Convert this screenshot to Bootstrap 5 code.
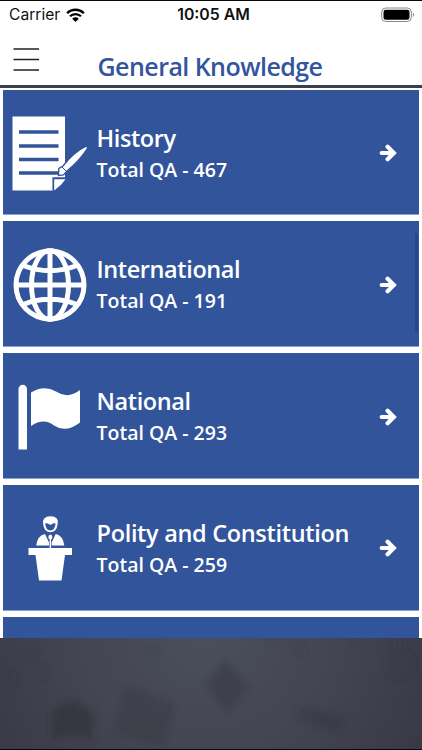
<!DOCTYPE html>
<html lang="en">
<head>
<meta charset="utf-8">
<meta name="viewport" content="width=device-width, initial-scale=1">
<title>General Knowledge</title>
<link rel="stylesheet" href="https://cdn.jsdelivr.net/npm/bootstrap@5.3.0/dist/css/bootstrap.min.css">
<style>
body{font-family:"Open Sans","Noto Sans",sans-serif;background:#fff}
.app{height:750px;border-top:1px solid #0b080c;border-bottom:1px solid #08070b}
.status{height:28px;font-family:Inter,sans-serif;font-size:16px;line-height:28px;color:#111;padding:0 7px 0 9px;flex:none}
.status .side{width:150px}
#carrier{font-size:15.600px}
.wifi{margin-left:6px}
.clock{font-weight:600;font-size:15.800px;padding-left:3px}
.topbar{height:59px;border-bottom:3px solid #38404b;flex:none}
.menu-btn{width:26px;height:24px;left:13px;top:18px}
.topbar h1{font-size:25px;font-weight:600;line-height:32px;letter-spacing:-.55px;color:#33559d;margin:21px 0 0;padding-right:2px}
.topics{height:550px;padding:1.500px 3px 0;gap:6px;flex:none}
.topic{height:125.75px;background:#31549b;color:#fff;padding-top:2.400px;padding-left:9px;padding-right:22px;flex:none;border-bottom:1px solid #8ba2d0}
.pic{width:76px;height:76px;flex:none}
.words{margin-left:8.500px}
.words h2{font-size:23.500px;font-weight:600;line-height:32px;letter-spacing:-.4px;margin:0}
.words h2.wide{letter-spacing:-.32px}
.words p{font-size:19.500px;font-weight:600;line-height:31px;margin:0}
.scrollmark{right:1px;top:12px;width:3px;height:99px;background:#29488a;border-radius:2px}
.ad{min-height:0}
</style>
<script src="https://cdn.jsdelivr.net/npm/bootstrap@5.3.0/dist/js/bootstrap.bundle.min.js"></script>
</head>
<body class="overflow-hidden">
<svg class="d-none"><symbol id="arrow" viewBox="0 0 18 18"><path d="M2.700 9H15M8.600 2.800L14.800 9L8.600 15.200" fill="none" stroke="#fff" stroke-width="4.200" stroke-linecap="round" stroke-linejoin="miter"/></symbol></svg>
<div class="app d-flex flex-column overflow-hidden">
<div class="status d-flex justify-content-between">
<div class="side d-flex align-items-center"><span id="carrier">Carrier</span>
<svg class="wifi" width="19" height="15" viewBox="0 0 19 15"><g fill="none" stroke="#000" stroke-width="2.300"><path d="M1.100 5.200a12 12 0 0 1 16.800 0"/><path d="M4 8.300a7.800 7.800 0 0 1 11 0"/></g><path d="M6.200 10.700a4.700 4.700 0 0 1 6.600 0L9.500 14z"/></svg></div>
<span class="clock">10:05 AM</span>
<div class="side d-flex justify-content-end align-items-center"><svg width="34" height="16" viewBox="0 0 34 16"><rect x=".7" y="1" width="29.600" height="13.500" rx="4" fill="none" stroke="#888"/><rect x="2.500" y="2.800" width="26" height="9.900" rx="2.300"/><path d="M31.800 5.500q2.400 2.200 0 4.600z" fill="#888"/></svg></div>
</div>
<header class="topbar position-relative text-center">
<svg class="menu-btn position-absolute" viewBox="0 0 26 24"><path d="M.5 2H26M.5 12.500H26M.5 23H26" stroke="#222" stroke-width="1.400"/></svg>
<h1><span>General Knowledge</span></h1>
</header>
<main class="topics d-flex flex-column overflow-hidden">
<section class="topic d-flex align-items-center">
<svg class="pic" viewBox="0 0 76 76"><path fill="#fff" d="M.5 1.500H53V63H41V75.500H.5z"/><path d="M7 17H46.500M7 31H46.500M7 44.500H46.500M7 58H47" stroke="#31549b" stroke-width="3.600"/><path d="M42.200 75.500V64.200H53.500Q49 71 42.200 75.500z" fill="#fff"/><path d="M41 75.500V62.800H54" fill="none" stroke="#31549b" stroke-width="1.100"/><path d="M46.500 60.500L46.800 53.500L51 51Q62 37 74 31.200Q76 31 75 34Q68 45 55 56L51.500 60z" fill="#fff" stroke="#31549b" stroke-width="1.300"/><path d="M50 52L55 57" stroke="#31549b"/></svg>
<div class="words"><h2><span>History</span></h2><p><span>Total QA - 467</span></p></div>
<svg class="ms-auto" width="18" height="18"><use href="#arrow"/></svg>
</section>
<section class="topic d-flex align-items-center position-relative">
<svg class="pic" viewBox="0 0 76 76"><g fill="none" stroke="#fff" stroke-width="5"><circle cx="38" cy="38" r="34"/><ellipse cx="38" cy="38" rx="18.500" ry="34.500"/><path d="M38 4V73M3 38H73M11 18.500Q38 29 65 18.500M11 57.500Q38 47 65 57.500"/></g></svg>
<div class="words"><h2><span>International</span></h2><p><span>Total QA - 191</span></p></div>
<svg class="ms-auto" width="18" height="18"><use href="#arrow"/></svg>
<i class="scrollmark position-absolute"></i>
</section>
<section class="topic d-flex align-items-center">
<svg class="pic" viewBox="0 0 76 76"><path fill="#fff" d="M6.500 70.500V10a4.250 4.250 0 0 1 8.500 0V70.500zM19 13.500Q32 5.500 44 12.500Q56 20.500 68 11V43.500Q54 54.500 42 46.500Q32 38.500 19 47z"/></svg>
<div class="words"><h2><span>National</span></h2><p><span>Total QA - 293</span></p></div>
<svg class="ms-auto" width="18" height="18"><use href="#arrow"/></svg>
</section>
<section class="topic d-flex align-items-center">
<svg class="pic" viewBox="0 0 76 76"><g fill="#fff" transform="translate(0 -.5)"><path d="M16.500 38.500H60V45.500H53L49.500 71H27L23.500 45.500H16.500z"/><path d="M24.200 36Q25.500 26 33 24.500L37 33L37 36zM52.300 36Q51 26 43.700 24.500L39.700 33V36z"/><path d="M37.600 28H39.100V38.500H37.600z"/><ellipse cx="38.350" cy="27.500" rx="2" ry="2.600"/><path fill-rule="evenodd" d="M31.200 15Q29.500 7 38.500 6.800Q47.500 7 45.600 15Q44.500 22.800 38.400 22.800Q32.300 22.800 31.200 15zM33.200 14Q33.700 20.800 38.400 21Q43 20.800 43.600 14Q41 13 38.500 15.500Q35.500 13 33.200 14z"/></g></svg>
<div class="words"><h2 class="wide"><span>Polity and Constitution</span></h2><p><span>Total QA - 259</span></p></div>
<svg class="ms-auto" width="18" height="18"><use href="#arrow"/></svg>
</section>
<section class="topic"></section>
</main>
<footer class="ad flex-grow-1">
<svg class="d-block" width="422" height="112" viewBox="0 0 422 112"><defs><radialGradient id="glow" gradientUnits="userSpaceOnUse" cx="205" cy="-10" r="260"><stop stop-color="#4b4f5c"/><stop offset=".5" stop-color="#434551"/><stop offset="1" stop-color="#373844"/></radialGradient><filter id="soft"><feGaussianBlur stdDeviation="3"/></filter></defs>
<rect width="422" height="112" fill="url(#glow)"/>
<g fill="#30323c" filter="url(#soft)"><path d="M52 72L74 62L94 75L92 103L74 96L52 102z" opacity=".65"/><path d="M128 50L173 68L161 107L117 92z" opacity=".35"/><path d="M128 50L173 68L161 107L117 92z" fill="none" stroke="#30323c" stroke-width="3" opacity=".25"/><path d="M225 22L247 50L227 75L206 47z" opacity=".4"/><path d="M299 69L344 80L340 94L298 80z" opacity=".4"/><g opacity=".25"><circle cx="32" cy="17" r="5"/><circle cx="13" cy="41" r="6"/><circle cx="44" cy="34" r="6"/><circle cx="154" cy="12" r="4"/></g><circle cx="400" cy="26" r="12" fill="none" stroke="#30323c" stroke-width="5" opacity=".25"/><path d="M394 0H406L404 12H396zM290 0H300L307 18L300 17zM348 0H358L354 7zM266 0H276L271 6z" opacity=".2"/></g></svg>
</footer>
</div>
</body>
</html>
